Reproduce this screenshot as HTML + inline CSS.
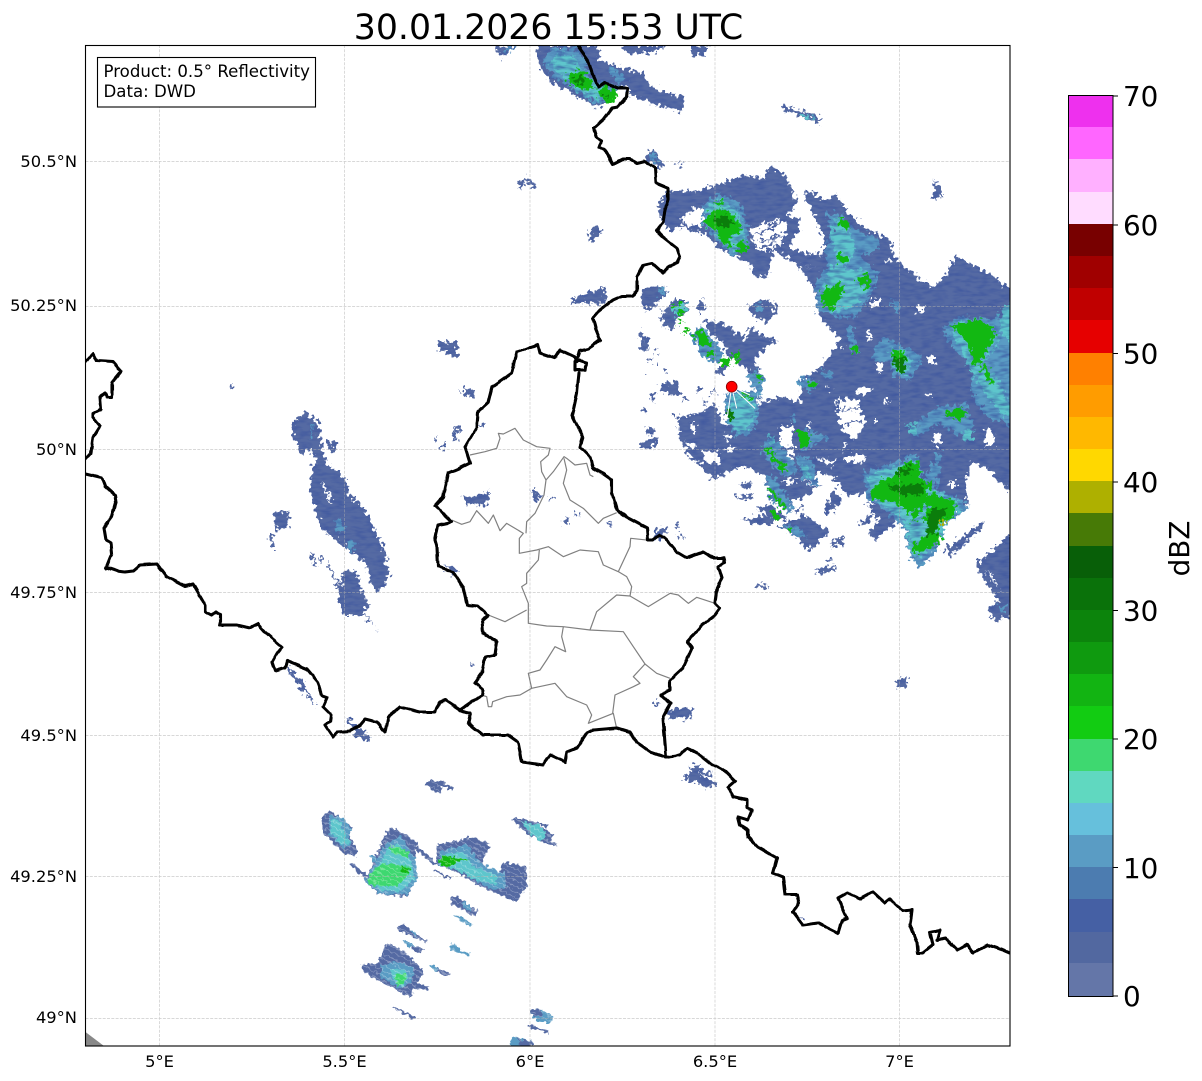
<!DOCTYPE html>
<html><head><meta charset="utf-8"><style>
html,body{margin:0;padding:0;background:#fff}
svg{display:block}
text{font-family:"DejaVu Sans","Liberation Sans",sans-serif;fill:#000}
.b{fill:#556aa3}.c{fill:#5a9cc4}.t{fill:#5ec6cc}.g{fill:#12b812}.d{fill:#0b7d0b}.w{fill:#fff}
</style></head><body>
<svg width="1202" height="1081" viewBox="0 0 1202 1081" xmlns="http://www.w3.org/2000/svg">
<defs>
<clipPath id="ax"><rect x="85.5" y="45" width="924.5" height="1001"/></clipPath>
<filter id="r" color-interpolation-filters="sRGB" filterUnits="userSpaceOnUse" x="60" y="20" width="980" height="1050">
<feTurbulence type="fractalNoise" baseFrequency="0.24" numOctaves="2" seed="4" result="n"/>
<feDisplacementMap in="SourceGraphic" in2="n" scale="13" xChannelSelector="R" yChannelSelector="G" result="s"/>
<feColorMatrix in="s" type="matrix" values="0 0 0 0 0  0 0 0 0 0  0 0 0 0 0  -3 0 3 0 0" result="m"/>
<feTurbulence type="fractalNoise" baseFrequency="0.09 0.3" numOctaves="2" seed="9"/>
<feColorMatrix type="matrix" values="0 0 0 0 .22  0 0 0 0 .32  0 0 0 0 .62  1.6 0 0 0 -.65" result="tint"/>
<feComposite in="tint" in2="m" operator="in" result="t2"/>
<feMerge><feMergeNode in="s"/><feMergeNode in="t2"/></feMerge>
</filter>
<filter id="r2" color-interpolation-filters="sRGB" filterUnits="userSpaceOnUse" x="60" y="20" width="980" height="1050">
<feTurbulence type="fractalNoise" baseFrequency="0.3" numOctaves="1" seed="11"/>
<feDisplacementMap in="SourceGraphic" scale="7" xChannelSelector="R" yChannelSelector="G"/>
</filter>
<filter id="wig" color-interpolation-filters="sRGB" filterUnits="userSpaceOnUse" x="60" y="20" width="980" height="1050">
<feTurbulence type="fractalNoise" baseFrequency="0.12" numOctaves="1" seed="7"/>
<feDisplacementMap in="SourceGraphic" scale="3" xChannelSelector="R" yChannelSelector="G"/>
</filter>
<pattern id="st" width="7" height="5" patternUnits="userSpaceOnUse" patternTransform="rotate(27)">
<rect width="7" height="1" fill="#fff" opacity=".3"/>
</pattern>
</defs>
<rect width="1202" height="1081" fill="#fff"/>
<text x="548.5" y="39" font-size="34.7" text-anchor="middle">30.01.2026 15:53 UTC</text>

<g clip-path="url(#ax)">
<g filter="url(#r)">
<!-- north-east zoom3 region -->
<g transform="translate(640 160) scale(.33333)">
<!-- main mass -->
<polygon class="b" points="490,100 510,90 555,125 590,100 620,155 680,210 750,240 755,280 790,320 830,350 880,380 920,340 950,290 1040,335 1125,395 1125,1010 1040,925 990,910 975,970 985,1030 950,1070 900,1095 800,1060 780,1040 680,1000 620,1005 590,960 540,935 520,960 450,965 380,950 310,915 255,940 225,960 150,890 118,840 115,770 180,760 225,730 240,770 255,800 340,770 370,720 430,710 480,730 490,660 545,620 600,540 540,470 530,430 520,380 470,310 540,325 555,240"/>
<!-- north mass -->
<polygon class="b" points="55,140 80,90 160,95 250,70 300,45 370,55 380,20 420,30 450,70 470,130 440,170 480,180 470,220 445,265 555,290 540,325 470,310 400,270 380,350 340,350 330,310 260,280 190,220 125,200 75,210"/>
<polygon class="w" points="125,170 170,140 200,165 185,200 130,195"/>
<polygon class="w" points="330,205 420,175 445,195 425,250 385,270 350,270"/>
<path d="M345 222L400 205M355 245L425 225M365 262L410 250M385 195L435 185" stroke="#556aa3" stroke-width="7" fill="none"/>
<!-- white speckle holes in the mass -->
<path class="w" d="M690 420h30v20h-30zM680 520h15v20h-15zM650 685h45v15h-45zM860 590h25v20h-25zM710 610h20v25h-20zM830 440h25v15h-25zM880 825h20v30h-20zM540 560h40v12h-40zM1035 810h25v50h-25zM420 800h40v60h-40zM190 875h50v35h-50zM600 560h15v8h-15zM560 680h12v8h-12zM740 300h15v10h-15zM730 720h15v10h-15zM860 700h10v10h-10zM500 790h12v12h-12zM610 850h10v12h-10zM150 790h15v25h-15zM700 780h10v10h-10z"/>
<polygon class="w" points="590,720 650,715 680,790 640,840 600,800"/>
<path d="M600 750L665 745M610 790L670 785" stroke="#556aa3" stroke-width="6" fill="none"/>
<!-- cells -->
<polygon class="c" points="190,130 240,100 300,130 325,210 325,270 280,290 240,250 190,190"/>
<polygon class="t" points="200,140 240,115 290,145 312,215 312,262 280,275 240,240 198,185"/>
<polygon class="g" points="192,175 225,148 262,148 305,195 298,222 272,228 267,258 248,253 232,212 202,197"/>
<polygon class="d" points="222,175 250,163 278,185 262,207 235,197"/>
<polygon class="g" points="283,255 305,238 328,265 305,282"/>
<polygon class="g" points="225,120 245,120 245,140 228,140"/>
<polygon class="c" points="555,160 600,160 640,205 720,240 715,270 660,290 715,340 700,390 650,470 600,470 530,450 525,370 560,320 555,260 580,215"/>
<polygon class="t" points="580,180 600,170 625,210 650,260 610,330 680,330 695,380 640,440 580,460 540,420 560,340 590,300 575,230"/>
<polygon class="g" points="598,173 627,183 622,207 598,197"/>
<polygon class="g" points="588,283 622,283 617,307 593,307"/>
<polygon class="g" points="648,353 682,343 697,377 675,387"/>
<polygon class="g" points="543,393 575,383 597,363 612,390 592,422 582,452 558,442 543,417"/>
<polygon class="c" points="620,500 635,500 660,580 630,575"/>
<polygon class="g" points="635,560 655,560 655,578 640,578"/>
<polygon class="c" points="905,510 950,470 1060,480 1125,440 1125,800 1040,770 990,690 1000,630 940,560"/>
<polygon class="t" points="930,520 960,480 1050,490 1080,540 1020,620 1060,640 1125,760 1090,770 1030,690 990,630 960,560"/>
<polygon class="t" points="1080,450 1125,420 1125,560 1085,520"/>
<polygon class="g" points="933,498 1000,478 1040,488 1067,525 1042,567 1022,617 998,612 983,552 958,517"/>
<polygon class="g" points="1025,620 1040,620 1060,670 1045,670"/>
<polygon class="c" points="700,570 730,530 800,565 850,590 810,660 760,650 745,605 700,600"/>
<polygon class="t" points="745,570 790,565 815,600 800,650 770,640"/>
<polygon class="d" points="750,580 790,580 800,625 780,640 765,615"/>
<polygon class="g" points="748,576 790,572 802,612 790,590 760,595"/>
<polygon class="c" points="835,780 900,740 980,730 1000,800 960,830 900,790 830,830"/>
<polygon class="g" points="913,758 967,743 987,760 950,782"/>
<polygon class="t" points="965,815 1000,805 995,840 970,842"/>
<polygon class="c" points="750,420 770,420 785,450 765,455"/>
<polygon class="t" points="800,790 830,790 835,820 810,825"/>
<!-- left of the radar -->
<polygon class="b" points="60,680 115,670 118,710 75,700"/>
<polygon class="b" points="5,390 75,375 70,400 20,460 10,440"/>
<polygon class="c" points="40,395 75,380 55,410"/>
<polygon class="b" points="65,465 100,420 140,420 145,450 110,480 105,510 70,500"/>
<polygon class="t" points="95,440 140,425 140,450 105,470"/>
<polygon class="g" points="98,432 120,428 118,440 100,442"/>
<polygon class="g" points="110,455 135,450 130,462 112,465"/>
<polygon class="g" points="115,485 135,482 122,497"/>
<polygon class="g" points="130,515 148,497 150,508 135,525"/>
<polygon class="b" points="170,440 185,420 195,440 180,460"/>
<polygon class="b" points="190,480 250,490 320,540 330,500 380,535 415,540 380,560 345,600 370,660 340,640 310,620 260,580 240,540 200,510"/>
<polygon class="c" points="150,520 190,500 250,580 245,605 205,605 175,570"/>
<polygon class="g" points="160,520 190,510 215,550 195,565 175,550"/>
<polygon class="g" points="198,575 225,572 230,590 208,590"/>
<polygon class="g" points="235,600 270,590 275,625 250,615"/>
<polygon class="g" points="275,580 295,575 295,610 285,610"/>
<polygon class="b" points="320,435 390,420 410,440 380,490 345,470"/>
<polygon class="c" points="345,435 370,435 365,455 350,452"/>
<polygon class="b" points="0,510 20,530 25,570 5,575"/>
<path class="b" d="M30 590h8v8h-8zM50 610h8v8h-8zM70 630h7v7h-7zM15 640h8v8h-8zM30 710h12v12h-12zM10 745h14v10h-14zM130 715h15v8h-15zM170 680h12v12h-12zM215 690h12v8h-12zM190 720h10v10h-10zM20 800h20v25h-20zM0 850h30v12h-30zM95 760h12v12h-12zM40 570h10v12h-10z"/>
<!-- radar lobe -->
<polygon class="c" points="325,640 360,630 372,660 360,720 345,690 330,670"/>
<polygon class="g" points="340,640 368,650 360,665"/>
<polygon class="c" points="258,700 300,690 350,700 358,770 330,822 285,828 255,770"/>
<polygon class="t" points="268,712 300,700 345,715 345,770 320,812 285,815 262,770"/>
<circle class="d" cx="270" cy="765" r="14"/>
<polygon class="g" points="300,702 340,712 335,722"/>
<polygon class="b" points="225,625 255,615 250,645 232,645"/>
<polygon class="c" points="470,665 500,650 530,665 525,690 495,690"/>
<polygon class="g" points="503,665 528,665 525,680 505,680"/>
<polygon class="c" points="540,635 570,630 580,655 555,655"/>
<polygon class="c" points="450,770 460,765 470,785 455,785"/>
</g>
<g transform="translate(640 400) scale(.33333)">
<polygon class="b" points="370,225 460,235 540,260 480,300 440,300 390,280"/>
<polygon class="w" points="190,170 215,155 235,180 210,190"/>
<polygon class="w" points="140,125 170,135 145,145"/>
<polygon class="w" points="440,150 465,150 450,190"/>
<polygon class="w" points="525,175 590,180 580,200"/>
<polygon class="w" points="610,165 680,165 670,185 620,188"/>
<polygon class="w" points="250,100 275,110 265,125"/>
<polygon class="w" points="245,150 285,135 280,155"/>
<polygon class="w" points="430,240 470,235 450,260"/>
<polygon class="w" points="920,250 950,245 945,265"/>
<polygon class="w" points="1040,90 1065,110 1060,140"/>
<polygon class="b" points="550,340 580,270 610,300 570,340"/>
<polygon class="b" points="300,255 335,240 335,265 310,265"/>
<polygon class="b" points="290,290 335,282 335,295 295,300"/>
<polygon class="b" points="305,358 400,345 395,375 350,372"/>
<polygon class="b" points="350,325 390,310 440,355 420,365"/>
<polygon class="b" points="470,325 495,315 465,340"/>
<polygon class="b" points="415,380 495,345 570,395 510,450 490,440 480,415"/>
<polygon class="c" points="425,378 465,375 500,410 470,410"/>
<polygon class="g" points="440,382 458,382 458,395 445,395"/>
<polygon class="b" points="570,430 610,405 605,430 580,440"/>
<polygon class="b" points="530,510 585,495 585,510 530,525"/>
<polygon class="b" points="560,480 575,475 575,488"/>
<polygon class="b" points="655,370 695,340 690,360 670,378"/>
<polygon class="b" points="680,310 700,310 780,320 760,375 705,420 685,395 720,360 700,340"/>
<polygon class="b" points="910,450 1030,365 1025,385 930,470"/>
<polygon class="b" points="1010,490 1110,400 1125,400 1125,640 1065,665 1045,630 1075,600 1010,500"/>
<polygon class="c" points="1075,620 1105,610 1090,640"/>
<polygon class="w" points="1040,510 1060,530 1075,570 1060,545"/>
<polygon class="c" points="370,130 400,110 470,200 470,220 430,230 370,165"/>
<polygon class="t" points="380,110 400,105 410,130 395,135"/>
<polygon class="g" points="370,145 385,145 450,210 435,220"/>
<polygon class="c" points="470,95 505,90 565,110 530,130 510,145 485,150"/>
<polygon class="g" points="468,93 502,93 512,130 485,147"/>
<polygon class="c" points="375,230 400,230 460,320 450,340 390,300"/>
<polygon class="g" points="380,265 395,265 440,320 425,325"/>
<polygon class="g" points="385,330 410,330 425,360 410,360"/>
<polygon class="c" points="470,170 510,170 535,255 490,240"/>
<polygon class="t" points="480,200 505,195 510,235 490,225"/>
<polygon class="c" points="670,220 700,205 770,185 830,160 850,240 880,200 890,160 905,160 890,270 960,295 985,320 950,350 910,375 900,410 885,460 840,500 815,475 790,380 700,305 680,295"/>
<polygon class="t" points="680,230 760,200 830,175 850,250 880,270 955,300 960,335 920,365 900,420 840,480 818,462 790,355 700,300"/>
<polygon class="g" points="695,270 730,235 760,230 790,195 835,180 840,235 870,245 860,290 880,280 945,305 945,345 905,365 890,400 905,415 880,440 830,460 815,450 830,425 870,400 860,365 850,360 870,320 855,305 830,355 810,365 830,320 800,345 790,315 720,300 695,295"/>
<polygon class="d" points="770,205 815,200 810,225 770,225"/>
<polygon class="d" points="740,255 850,255 845,285 790,285 760,270"/>
<polygon class="d" points="880,320 920,330 900,370 885,405 860,405 860,360"/>
<polygon points="902,362 915,360 912,376 904,376" fill="#aeb000"/>
<polygon class="c" points="870,190 890,195 880,240 865,235"/>
</g>
<!-- top -->
<g transform="translate(490 40) scale(.33333)">
<polygon class="b" points="140,15 325,15 325,55 380,80 450,95 480,140 530,160 585,170 575,215 530,205 490,190 420,170 415,140 380,140 350,185 320,205 290,185 240,155 180,125 145,75"/>
<polygon class="c" points="155,60 190,20 270,30 310,125 390,140 360,175 320,195 270,160 190,110"/>
<polygon class="t" points="180,70 200,40 250,50 300,120 360,145 340,180 310,180 260,150"/>
<polygon class="g" points="230,103 270,90 303,118 315,148 280,150 237,132"/>
<polygon class="g" points="320,155 350,136 385,170 350,190"/>
<polygon class="d" points="255,115 280,110 285,130 260,130"/>
<polygon class="d" points="340,165 360,165 350,180"/>
<polygon class="c" points="355,90 375,85 410,120 385,130"/>
<polygon class="b" points="395,15 525,15 500,35 440,42 400,35"/>
<polygon class="b" points="605,15 655,15 640,45 605,50"/>
<polygon class="b" points="15,25 50,15 80,15 35,55"/>
<polygon class="c" points="45,20 80,15 55,40"/>
<polygon class="b" points="875,195 905,205 1000,235 985,250 905,220 875,210"/>
<polygon class="t" points="930,220 975,235 965,240 935,230"/>
<polygon class="b" points="465,355 490,325 520,375 510,390 465,360"/>
<polygon class="c" points="475,345 490,335 510,375 490,375"/>
<polygon class="b" points="80,435 105,410 140,435 125,445 105,425 95,450"/>
<polygon class="b" points="295,575 320,560 335,575 305,605"/>
<polygon class="b" points="245,778 340,740 350,790 245,790"/>
<polygon class="b" points="465,745 525,735 530,760 500,790 465,790"/>
<polygon class="c" points="500,740 530,745 510,770"/>
<polygon class="b" points="558,370 580,365 578,373 560,375"/>
</g>
</g>
<!-- mid / lower radar -->
<g filter="url(#r)">
<g transform="translate(420 340) scale(.33333)">
<polygon class="b" points="55,5 112,5 112,55 70,35 55,35"/>
<polygon class="b" points="138,148 165,145 165,168 135,170"/>
<rect class="b" x="117" y="145" width="6" height="14"/>
<rect class="b" x="100" y="262" width="8" height="42"/>
<rect class="b" x="110" y="262" width="7" height="22"/>
<rect class="b" x="45" y="285" width="6" height="15"/>
<polygon class="b" points="65,325 72,300 82,300 75,328"/>
<rect class="b" x="180" y="250" width="15" height="10"/>
<polygon class="b" points="130,470 160,470 205,455 205,480 190,500 170,490 135,495"/>
<polygon class="b" points="335,450 345,450 365,470 345,485"/>
<rect class="b" x="385" y="475" width="10" height="10"/>
<polygon class="b" points="433,535 447,535 447,552 433,552"/>
<polygon class="b" points="460,515 470,515 478,528 467,530"/>
<rect class="b" x="565" y="550" width="10" height="8"/>
<polygon class="b" points="700,590 710,568 740,558 745,575 710,602"/>
<rect class="b" x="775" y="585" width="18" height="7"/>
<rect class="b" x="768" y="552" width="8" height="8"/>
<polygon class="b" points="700,1085 718,1085 718,1094 700,1094"/>
<polygon class="b" points="760,1105 800,1102 815,1112 815,1135 745,1135 745,1120"/>
<polygon class="b" points="145,968 150,965 162,978 157,982"/>
<polygon class="b" points="70,672 85,680 110,688 112,700 90,698"/>
<polygon class="b" points="655,320 680,300 720,295 700,320 670,325"/>
<polygon class="b" points="670,210 685,205 685,218 672,218"/>
<polygon class="b" points="690,170 705,165 708,182 695,182"/>
<polygon class="b" points="720,130 770,125 780,165 740,160"/>
</g>
<g transform="translate(80 340) scale(.33333)">
<polygon class="b" points="640,245 675,215 715,245 725,325 740,370 800,420 805,460 855,510 910,620 930,710 895,760 870,730 860,670 790,620 720,560 690,450 700,375 715,360 690,325 665,350 640,285"/>
<polygon class="w" points="720,430 735,435 760,490 745,480"/>
<polygon class="c" points="760,535 785,540 795,570 770,575"/>
<polygon class="c" points="800,595 820,605 825,635 805,630"/>
<rect class="c" x="692" y="250" width="5" height="50"/>
<polygon class="b" points="578,520 620,510 630,555 590,570"/>
<polygon class="b" points="565,578 575,580 585,625 578,625"/>
<polygon class="b" points="775,780 785,700 815,690 835,705 840,740 868,795 850,815 890,868 850,825 790,825"/>
<polygon class="b" points="740,665 745,665 800,780 795,790"/>
<polygon class="b" points="692,640 698,638 710,680 702,680"/>
<polygon class="b" points="720,655 725,652 730,670 725,670"/>
<polygon class="b" points="740,298 765,300 768,335 748,338"/>
<polygon class="b" points="620,990 630,985 708,1092 703,1097"/>
<polygon class="b" points="640,1008 660,1010 680,1045 665,1045"/>
<polygon class="b" points="795,1130 815,1142 840,1165 872,1195 865,1205 830,1190 815,1160"/>
<rect class="b" x="456" y="130" width="3" height="22"/>
</g>
<g transform="translate(640 740) scale(.33333)">
<polygon class="b" points="155,78 175,72 178,92 215,95 215,105 180,105 215,120 235,132 232,141 190,138 172,128 132,122 135,102 155,98"/>
<rect class="b" x="475" y="534" width="22" height="5"/>
</g>
<g transform="translate(640 400) scale(.33333)">
<polygon class="b" points="350,550 378,552 380,560 350,564"/>
</g>
<g transform="translate(640 160) scale(.33333)">
<polygon class="b" points="880,55 915,105 885,115 878,105 888,90"/>
</g>
<polygon class="b" points="895,680 906,678 909,684 900,688"/>
</g>
<!-- south cells -->
<g filter="url(#r2)">
<g transform="translate(300 780) scale(.33333)">
<polygon class="b" points="375,10 395,0 430,5 462,22 458,30 425,20 420,40 400,35"/>
<polygon class="b" points="62,115 90,90 155,140 150,170 176,218 165,228 130,220 70,160"/>
<polygon class="c" points="85,105 130,115 155,150 145,175 155,195 130,205 90,165"/>
<polygon class="t" points="95,115 125,125 130,155 150,190 125,195 90,150"/>
<polygon class="b" points="250,170 275,140 350,185 345,240 350,295 320,350 235,340 195,305 220,245 240,200"/>
<polygon class="c" points="255,195 300,165 345,235 355,290 320,345 240,340 195,305 225,250"/>
<polygon class="t" points="265,205 300,190 335,245 345,295 300,335 240,330 210,300 235,255"/>
<polygon fill="#3ed870" points="220,270 250,250 330,260 320,290 290,320 210,315 200,300"/>
<polygon fill="#3ed870" points="270,195 330,215 320,235 270,215"/>
<polygon class="g" points="300,255 330,265 328,280 305,275"/>
<polygon class="b" points="410,195 430,190 450,185 490,180 510,170 570,190 545,250 600,280 610,245 680,260 680,320 650,365 540,320 470,275 410,255"/>
<polygon class="c" points="420,215 500,190 540,250 610,280 620,325 580,330 470,270 415,255"/>
<polygon class="t" points="425,225 490,215 520,260 590,285 590,315 530,300 470,270 420,255"/>
<polygon class="g" points="415,245 430,225 510,240 470,245 440,265"/>
<polygon class="b" points="345,205 352,200 412,250 405,258"/>
<polygon class="b" points="150,255 160,252 205,285 195,295"/>
<polygon class="c" points="205,225 220,225 240,250 225,255"/>
<polygon class="b" points="400,270 405,268 452,292 450,300"/>
<polygon class="b" points="455,350 470,350 535,395 525,410 450,370"/>
<polygon class="c" points="485,365 510,375 515,395 490,385"/>
<polygon class="c" points="462,408 470,405 518,430 513,442"/>
<polygon class="b" points="295,440 305,432 345,460 382,482 378,487 335,468 300,455"/>
<polygon class="c" points="330,450 350,462 348,472"/>
<polygon class="c" points="308,483 318,480 345,498 330,505"/>
<polygon class="b" points="335,497 370,508 365,520 340,512"/>
<polygon class="c" points="450,495 462,490 485,510 512,520 510,528 480,520 450,508"/>
<polygon class="c" points="385,555 392,552 420,568 412,575"/>
<polygon class="b" points="412,565 447,578 444,590 410,575"/>
<polygon class="b" points="278,682 282,680 345,712 342,720"/>
<polygon class="b" points="185,555 200,550 230,552 250,510 265,490 320,520 372,575 350,610 390,622 385,630 335,625 340,645 330,650 270,620 230,600 190,575"/>
<polygon class="c" points="245,555 295,545 345,565 330,610 300,625 240,590"/>
<polygon class="t" points="270,565 315,570 325,590 310,620 285,610"/>
<polygon fill="#3ed870" points="285,585 320,580 315,610 290,615"/>
<polygon class="b" points="636,120 650,112 700,125 745,135 742,142 715,132 760,165 750,185 772,190 770,198 735,190 710,175 680,160"/>
<polygon class="t" points="665,125 720,135 738,160 725,185 690,160"/>
<polygon class="c" points="692,700 698,685 725,690 760,708 752,732 705,718"/>
<polygon class="b" points="695,685 725,690 725,712 695,705"/>
<polygon class="b" points="680,740 685,732 745,752 743,760"/>
<polygon class="c" points="630,785 640,770 700,785 695,800 635,798"/>
<polygon class="b" points="650,775 700,785 695,800 660,795"/>
</g>
<rect x="310" y="780" width="260" height="260" fill="url(#st)"/>
</g>
<g transform="translate(640 160) scale(.33333)" stroke="#fff" stroke-width="3" fill="none">
<path d="M275 680L262 770M275 680L290 745M275 680L330 705M275 680L320 690M275 680L240 640M275 680L300 640M275 680L215 700M275 680L345 745"/>
</g>
<polygon points="85.5,1032 104,1046 85.5,1046" fill="#888"/>
</g>

<!-- grid -->
<g stroke="#b0b0b0" stroke-width="0.7" stroke-dasharray="3 1.3" opacity=".65" fill="none">
<path d="M159.5 45V1046M344.5 45V1046M530 45V1046M715 45V1046M899.5 45V1046"/>
<path d="M85.5 161.5H1010M85.5 306.5H1010M85.5 449.5H1010M85.5 592.5H1010M85.5 735.5H1010M85.5 876.5H1010M85.5 1018.5H1010"/>
</g>

<!-- admin -->
<g clip-path="url(#ax)">
<g transform="translate(420 340) scale(.33333)" fill="none" stroke="#808080" stroke-width="3.6" stroke-linejoin="round">
<polyline points="150,345 195,335 230,325 240,295 235,280 250,282 285,265 310,300 350,320 390,325 385,345 362,365 365,395 378,420 400,395 432,350 440,355 465,375 500,370 510,405 520,410"/>
<polyline points="378,420 372,465 345,520 320,545 318,580"/>
<polyline points="432,355 440,390 430,430 450,480 490,505 535,550 550,535 590,518"/>
<polyline points="95,540 125,553 150,545 170,512 205,550 220,525 240,572 260,550 310,580 298,595 298,640 350,630 385,620 430,650 480,630 535,635 550,675 595,695 620,710 635,740 630,768"/>
<polyline points="595,695 630,620 632,595 680,600"/>
<polyline points="358,630 355,660 320,700 320,730 305,740 325,790 325,850 380,858 430,860 510,870 610,875 640,920 675,972 710,1000 750,1015"/>
<polyline points="205,825 255,845 320,810"/>
<polyline points="430,860 425,890 437,935 405,920 380,960 360,990 325,1000 335,1045 405,1030 440,1070 500,1095 515,1125 505,1150 580,1120 590,1165"/>
<polyline points="335,1045 300,1065 260,1070 218,1085 215,1100 205,1100 200,1070 185,1065"/>
<polyline points="510,870 530,815 590,765 630,768 685,800 750,760 775,765 805,790 830,772 885,790"/>
<polyline points="675,972 640,1010 660,1030 640,1040 585,1065 578,1120"/>
</g>
<!-- country borders -->
<g fill="none" stroke="#000" stroke-width="3.1" stroke-linejoin="round" stroke-linecap="round" filter="url(#wig)">
<polyline points="85.5,363 93,353 97,361 113,362 121,371 112,382 112,397 107,397 105,393 100,397 101,409 93,413 93,417 100,426 93,437 91,453 85.5,459"/>
<polyline points="85.5,474 102,478 105,486 115,495 116,503 112,517 104,528 106,540 111,543 112,553 106,568 108,568 117,571 125,572 133,571 140,565 157,564 166,576 185,586 193,584 205,605 205,612 212,615 216,612 220,615 220,625 237,625 250,628 258,624 267,634 282,647 277,653 272,662 275,671 285,668 287,661 307,669 318,682 322,695 327,698 323,707 331,715 330,722 325,725 333,737 338,732 350,731 359,726 365,719 377,722 385,732 388,717 400,707 420,712 435,712 440,702 445,700 460,710"/>
<polyline points="460,710 470,703 482,695 483,690 475,683 482,673 485,657 495,655 497,642 483,633 482,620 488,615 478,606 467,605 463,587 453,572 438,566 437,547 435,540 438,525 452,522 435,506 443,497 448,473 460,468 470,463 465,447 477,427 478,412 488,403 492,387 512,373 517,352 538,345 540,353 555,358 560,350 575,357 577,362"/>
<polyline points="578,46 588,60 592,73 598,87 605,83 618,88 628,88 627,97 618,107 612,108 603,120 594,128 597,138 602,141 599,147 605,150 613,164 623,159 630,159 637,163 645,161 655,168 656,183 668,188 668,200 665,210 663,222 657,231 663,237 677,248 680,257 677,263 668,267 663,273 652,263 643,265 637,277 637,290 632,296 622,296 613,300 600,310 593,318 596,330 600,340 588,349 580,351 577,360 586,363 585,370 575,370 575,362 580,360"/>
<polyline points="579,373 577,393 574,407 572,415 578,427 583,437 580,447 590,457 593,468 602,473 612,480 612,493 617,510 628,518 647,528 648,540 653,540 660,535 667,540 677,552 687,558 703,552 713,558 724,558 725,562 718,567 722,577 717,588 715,603 720,608 715,615 702,625 687,642 692,648 683,668 670,680 670,690 661,695 670,703 663,717 666,757"/>
<polyline points="460,710 470,713 468,723 483,735 508,735 518,742 522,762 543,765 550,755 565,762 567,752 577,748 587,733 593,730 617,728 630,732 637,743 650,752 665,757 680,755 687,748 700,755 710,763 725,771 735,781 728,787 733,797 747,800 747,808 752,810 748,820 738,817 740,825 748,830 748,837 758,847 777,858 773,873 783,877 785,895 797,895 799,903 793,912 803,925 818,923 838,933 842,920 847,918 838,898 847,893 860,899 873,892 885,903 890,899 903,911 912,910 910,925 917,943 918,953 923,953 933,945 930,932 940,930 937,940 945,938 957,950 967,944 973,953 988,945 1003,950 1010,953"/>
</g>
<circle cx="731.7" cy="386.7" r="5.4" fill="#f00" stroke="#800" stroke-width=".8"/>
</g>

<rect x="85.5" y="45.5" width="924.5" height="1000.5" fill="none" stroke="#000" stroke-width="1.1"/>

<rect x="97.5" y="57.5" width="218" height="49.5" fill="#fff" stroke="#000" stroke-width="1.1"/>
<text x="103.5" y="77" font-size="16.6">Product: 0.5° Reflectivity</text>
<text x="103.5" y="97" font-size="16.6">Data: DWD</text>

<g font-size="16.3" text-anchor="end">
<text x="77" y="167">50.5°N</text>
<text x="77" y="311">50.25°N</text>
<text x="77" y="455">50°N</text>
<text x="77" y="598">49.75°N</text>
<text x="77" y="741">49.5°N</text>
<text x="77" y="882">49.25°N</text>
<text x="77" y="1023">49°N</text>
</g>
<g font-size="16.3" text-anchor="middle">
<text x="159.5" y="1067">5°E</text>
<text x="344.5" y="1067">5.5°E</text>
<text x="530" y="1067">6°E</text>
<text x="715" y="1067">6.5°E</text>
<text x="899.5" y="1067">7°E</text>
</g>

<!-- colorbar -->
<g shape-rendering="crispEdges">
<rect x="1068.5" y="95.5" width="44.5" height="32" fill="#ee30ee"/>
<rect x="1068.5" y="127" width="44.5" height="32.5" fill="#ff66ff"/>
<rect x="1068.5" y="159" width="44.5" height="33" fill="#ffb0ff"/>
<rect x="1068.5" y="192" width="44.5" height="32" fill="#ffdcff"/>
<rect x="1068.5" y="224" width="44.5" height="32" fill="#780000"/>
<rect x="1068.5" y="256" width="44.5" height="32" fill="#a00000"/>
<rect x="1068.5" y="288" width="44.5" height="32" fill="#c00000"/>
<rect x="1068.5" y="320" width="44.5" height="33" fill="#e60000"/>
<rect x="1068.5" y="353" width="44.5" height="32" fill="#ff8000"/>
<rect x="1068.5" y="385" width="44.5" height="32" fill="#ff9c00"/>
<rect x="1068.5" y="417" width="44.5" height="32" fill="#ffb800"/>
<rect x="1068.5" y="449" width="44.5" height="32" fill="#ffd800"/>
<rect x="1068.5" y="481" width="44.5" height="32" fill="#aeb000"/>
<rect x="1068.5" y="513" width="44.5" height="33" fill="#477a06"/>
<rect x="1068.5" y="546" width="44.5" height="32" fill="#085f08"/>
<rect x="1068.5" y="578" width="44.5" height="32" fill="#0a720a"/>
<rect x="1068.5" y="610" width="44.5" height="32" fill="#0c840c"/>
<rect x="1068.5" y="642" width="44.5" height="32" fill="#0f9a0f"/>
<rect x="1068.5" y="674" width="44.5" height="32" fill="#12b412"/>
<rect x="1068.5" y="706" width="44.5" height="33" fill="#12cc12"/>
<rect x="1068.5" y="739" width="44.5" height="32" fill="#3ed870"/>
<rect x="1068.5" y="771" width="44.5" height="32" fill="#60d8c0"/>
<rect x="1068.5" y="803" width="44.5" height="32" fill="#66c0dc"/>
<rect x="1068.5" y="835" width="44.5" height="32" fill="#5a9cc4"/>
<rect x="1068.5" y="867" width="44.5" height="32" fill="#4c7cb0"/>
<rect x="1068.5" y="899" width="44.5" height="33" fill="#4560a4"/>
<rect x="1068.5" y="932" width="44.5" height="31" fill="#5268a0"/>
<rect x="1068.5" y="963" width="44.5" height="33" fill="#6476a8"/>
</g>
<rect x="1068.5" y="95.5" width="44.5" height="901" fill="none" stroke="#000" stroke-width="1"/>
<g stroke="#000" stroke-width="1"><path d="M1113 96H1118M1113 225H1118M1113 353.5H1118M1113 482H1118M1113 610.5H1118M1113 739H1118M1113 867.5H1118M1113 996H1118"/></g>
<g font-size="27.8">
<text x="1123" y="106">70</text>
<text x="1123" y="235">60</text>
<text x="1123" y="363.5">50</text>
<text x="1123" y="492">40</text>
<text x="1123" y="620.5">30</text>
<text x="1123" y="749">20</text>
<text x="1123" y="878">10</text>
<text x="1123" y="1006">0</text>
</g>
<text transform="translate(1189 548.5) rotate(-90)" font-size="27.8" text-anchor="middle">dBZ</text>
</svg>
</body></html>
